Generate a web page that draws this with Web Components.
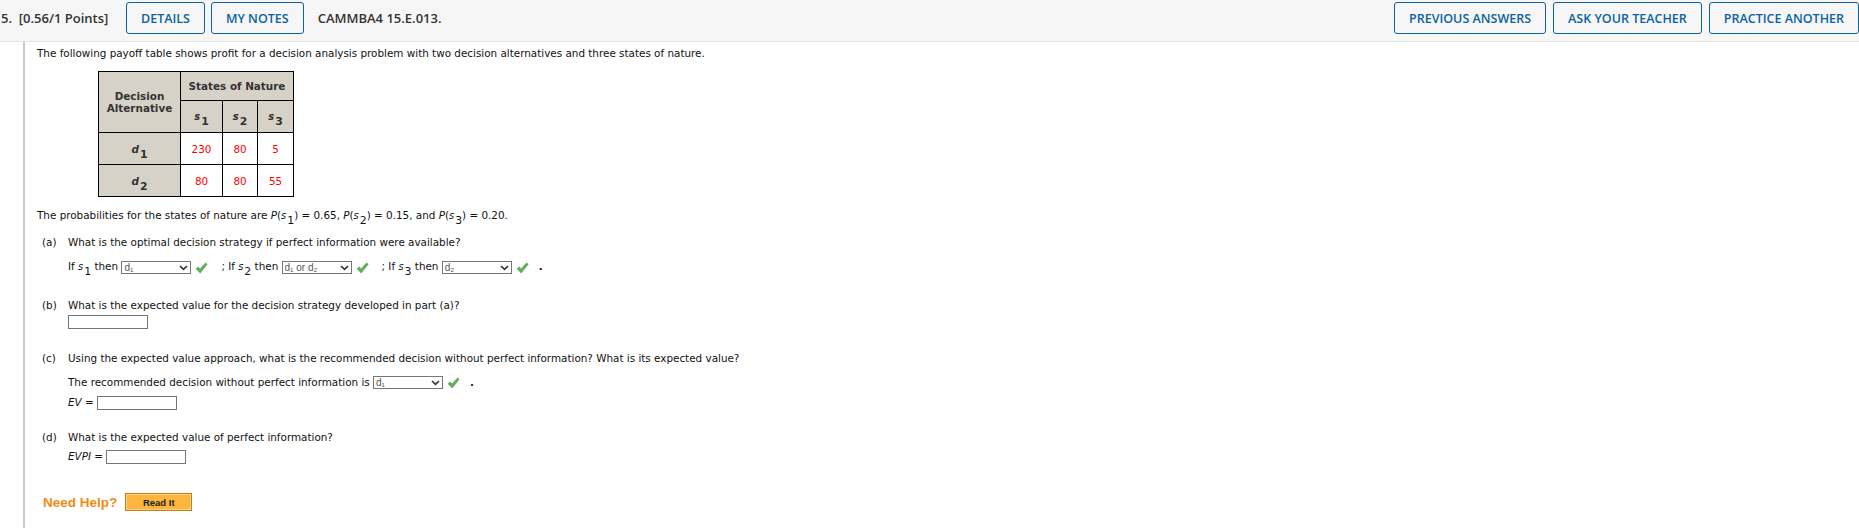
<!DOCTYPE html>
<html>
<head>
<meta charset="utf-8">
<title>CAMMBA4 15.E.013.</title>
<style>
  html, body { margin: 0; padding: 0; background: #fff; }
  body { font-family: "DejaVu Sans", Verdana, sans-serif; font-size: 10.4px; color: #111; overflow: hidden; }
</style>
</head>
<body>
<question-card></question-card>

<script>
const mathStyles = `
  .v { font-style: italic; }
  .sv { font-style: italic; font-size: 0.95em; }
  .sub { position: relative; top: 5px; font-size: 1.05em; font-style: normal; margin-left: 1px; line-height: 0; }
`;

class HeadButton extends HTMLElement {
  connectedCallback() {
    this.attachShadow({ mode: "open" });
    this.shadowRoot.innerHTML = `
      <style>
        :host { display: block; }
        button {
          display: block;
          height: 32px;
          padding: 0 14px;
          background: #f6f6f6;
          color: #0b629f;
          border: 1px solid #0b629f;
          border-radius: 3px;
          font: 600 12.5px "Open Sans", sans-serif;
          white-space: nowrap;
        }
      </style>
      <button><slot></slot></button>
    `;
  }
}

class QuestionHeader extends HTMLElement {
  connectedCallback() {
    this.attachShadow({ mode: "open" });
    this.shadowRoot.innerHTML = `
      <style>
        :host {
          display: flex;
          align-items: center;
          height: 42px;
          box-sizing: border-box;
          padding: 0 0 5px 1px;
          background: #f6f6f6;
          border-bottom: 1px solid #e3e3e3;
          font: 600 13px "Open Sans", sans-serif;
          color: #333;
        }
        .points { width: 125px; white-space: pre; }
        .code { margin-left: 14px; }
        .left, .right { display: flex; align-items: center; }
        .left { gap: 6px; }
        .right { gap: 7px; margin-left: auto; }
      </style>
      <span class="points">5.  [0.56/1 Points]</span>
      <div class="left">
        <head-button>DETAILS</head-button>
        <head-button>MY NOTES</head-button>
      </div>
      <span class="code">CAMMBA4 15.E.013.</span>
      <div class="right">
        <head-button>PREVIOUS ANSWERS</head-button>
        <head-button>ASK YOUR TEACHER</head-button>
        <head-button>PRACTICE ANOTHER</head-button>
      </div>
    `;
  }
}

class PayoffTable extends HTMLElement {
  connectedCallback() {
    this.attachShadow({ mode: "open" });
    this.shadowRoot.innerHTML = `
      <style>
        :host { display: block; margin-left: 61px; }
        ${mathStyles}
        table { border-collapse: collapse; border: 1px solid #000; font-size: 10.4px; table-layout: fixed; width: 195px; }
        td, th { border: 1px solid #000; padding: 0; text-align: center; height: 31px; }
        th { background: #d6d2c8; color: #333; font-weight: 700; line-height: 12px; }
        td { background: #fff; color: #f00; }
        .top { height: 28px; }
      </style>
      <table>
        <colgroup>
          <col style="width: 82px">
          <col style="width: 42px">
          <col style="width: 35px">
          <col style="width: 36px">
        </colgroup>
        <tr>
          <th rowspan="2">Decision<br>Alternative</th>
          <th class="top" colspan="3">States of Nature</th>
        </tr>
        <tr>
          <th><span class="sv">s</span><span class="sub">1</span></th>
          <th><span class="sv">s</span><span class="sub">2</span></th>
          <th><span class="sv">s</span><span class="sub">3</span></th>
        </tr>
        <tr><th><span class="v">d</span><span class="sub">1</span></th><td>230</td><td>80</td><td>5</td></tr>
        <tr><th><span class="v">d</span><span class="sub">2</span></th><td>80</td><td>80</td><td>55</td></tr>
      </table>
    `;
  }
}

class AnswerSelect extends HTMLElement {
  connectedCallback() {
    const value = this.getAttribute("value");
    this.attachShadow({ mode: "open" });
    this.shadowRoot.innerHTML = `
      <style>
        :host { display: inline-flex; align-items: center; vertical-align: middle; position: relative; }
        select {
          appearance: none;
          width: 70px;
          height: 13px;
          box-sizing: border-box;
          padding: 0 0 0 2px;
          margin: 0;
          background: #fff;
          border: 1px solid #767676;
          border-radius: 0;
          font: 10px/11px "Liberation Sans", sans-serif;
          color: #555;
        }
        .arrow { position: absolute; left: 58px; top: 4px; width: 9px; height: 6px; pointer-events: none; }
        .ok { width: 13px; height: 12px; margin: 1px 0 0 4px; }
      </style>
      <select><option>${value}</option></select>
      <svg class="arrow" viewBox="0 0 9 6"><path d="M1 1 L4.5 4.4 L8 1" fill="none" stroke="#333" stroke-width="1.7"/></svg>
      <svg class="ok" viewBox="0 0 13 12"><path d="M0.6 6.8 L3.2 4.4 L5 6.4 L10.6 0.6 L12.6 2.2 L5.2 11.4 Z" fill="#66ac62"/></svg>
    `;
  }
}

class AnswerBox extends HTMLElement {
  connectedCallback() {
    this.attachShadow({ mode: "open" });
    this.shadowRoot.innerHTML = `
      <style>
        :host { display: inline-block; vertical-align: middle; }
        input {
          display: block;
          width: 80px;
          height: 14px;
          box-sizing: border-box;
          margin: 0;
          padding: 0;
          background: #fff;
          border: 1px solid #767676;
          border-radius: 0;
        }
      </style>
      <input type="text">
    `;
  }
}

class QuestionPart extends HTMLElement {
  connectedCallback() {
    this.attachShadow({ mode: "open" });
    this.shadowRoot.innerHTML = `
      <style>
        :host { display: grid; grid-template-columns: 26px 1fr; margin-left: 5px; line-height: 12px; }
        .body { min-width: 0; }
      </style>
      <span>(${this.getAttribute("label")})</span>
      <div class="body"><slot></slot></div>
    `;
  }
}

class ReadIt extends HTMLElement {
  connectedCallback() {
    this.attachShadow({ mode: "open" });
    this.shadowRoot.innerHTML = `
      <style>
        :host { display: flex; align-items: center; gap: 8px; margin-left: 6px; }
        .need { font: 700 13.5px "Liberation Sans", sans-serif; color: #f08a12; }
        button {
          display: block;
          width: 67px;
          height: 18px;
          padding: 0;
          background: #fdb53c;
          border: 1px solid #c97a25;
          box-shadow: inset 0 0 0 1px #ffd27f;
          font: 700 9.5px "Liberation Sans", sans-serif;
          color: #222;
        }
      </style>
      <span class="need">Need Help?</span>
      <button>Read It</button>
    `;
  }
}

class QuestionCard extends HTMLElement {
  connectedCallback() {
    this.attachShadow({ mode: "open" });
    this.shadowRoot.innerHTML = `
      <style>
        :host { display: block; height: 528px; }
        ${mathStyles}
        .main {
          margin-left: 23px;
          padding: 5px 0 0 12px;
          border-left: 2px solid #c9c9c9;
          height: 481px;
          line-height: 12px;
          white-space: nowrap;
        }
        p { margin: 0; }
        payoff-table { margin-top: 12px; }
        .probs { margin-top: 12px; }
        .a { margin-top: 14px; }
        .b { margin-top: 25px; }
        .c { margin-top: 23px; }
        .d { margin-top: 21px; }
        .help { margin-top: 29px; }
        .row { margin-top: 12px; }
        .row-box { margin-top: 4px; }
        .row-ev { margin-top: 7px; }
        .row-evpi { margin-top: 7px; }
        .gap { display: inline-block; width: 13px; }
        .dot { display: inline-block; margin-left: 10px; font-weight: 700; }
      </style>
      <question-header></question-header>
      <div class="main">
        <p>The following payoff table shows profit for a decision analysis problem with two decision alternatives and three states of nature.</p>
        <payoff-table></payoff-table>
        <p class="probs">The probabilities for the states of nature are <span class="v">P</span>(<span class="sv">s</span><span class="sub">1</span>) = 0.65, <span class="v">P</span>(<span class="sv">s</span><span class="sub">2</span>) = 0.15, and <span class="v">P</span>(<span class="sv">s</span><span class="sub">3</span>) = 0.20.</p>

        <question-part class="a" label="a">
          What is the optimal decision strategy if perfect information were available?
          <div class="row">If <span class="sv">s</span><span class="sub">1</span> then <answer-select value="d₁"></answer-select><span class="gap"></span>; If <span class="sv">s</span><span class="sub">2</span> then <answer-select value="d₁ or d₂"></answer-select><span class="gap"></span>; If <span class="sv">s</span><span class="sub">3</span> then <answer-select value="d₂"></answer-select><span class="dot">.</span></div>
        </question-part>

        <question-part class="b" label="b">
          What is the expected value for the decision strategy developed in part (a)?
          <div class="row-box"><answer-box></answer-box></div>
        </question-part>

        <question-part class="c" label="c">
          Using the expected value approach, what is the recommended decision without perfect information? What is its expected value?
          <div class="row">The recommended decision without perfect information is <answer-select value="d₁"></answer-select><span class="dot">.</span></div>
          <div class="row-ev"><span class="v">EV</span> = <answer-box></answer-box></div>
        </question-part>

        <question-part class="d" label="d">
          What is the expected value of perfect information?
          <div class="row-evpi"><span class="v">EVPI</span> = <answer-box></answer-box></div>
        </question-part>

        <read-it class="help"></read-it>
      </div>
    `;
  }
}

customElements.define("head-button", HeadButton);
customElements.define("question-header", QuestionHeader);
customElements.define("payoff-table", PayoffTable);
customElements.define("answer-select", AnswerSelect);
customElements.define("answer-box", AnswerBox);
customElements.define("question-part", QuestionPart);
customElements.define("read-it", ReadIt);
customElements.define("question-card", QuestionCard);
</script>
</body>
</html>
